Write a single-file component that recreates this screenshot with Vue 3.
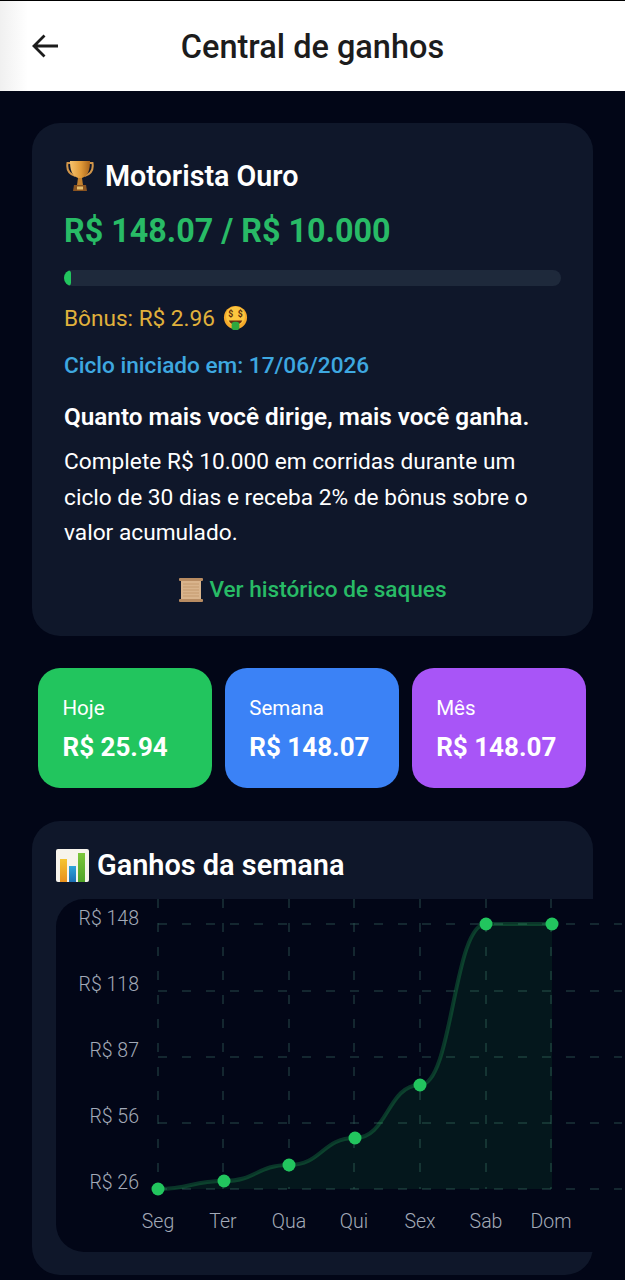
<script setup>
const stats = [
  { label: 'Hoje', value: 'R$ 25.94', cls: 'green' },
  { label: 'Semana', value: 'R$ 148.07', cls: 'blue' },
  { label: 'Mês', value: 'R$ 148.07', cls: 'purple' }
]
const pts = [[158, 1189], [224, 1181], [289, 1165], [355, 1138], [420, 1085], [486, 924], [552, 924]]
const days = ['Seg', 'Ter', 'Qua', 'Qui', 'Sex', 'Sab', 'Dom']
const yLabels = [['R$ 148', 924], ['R$ 118', 990], ['R$ 87', 1056], ['R$ 56', 1122], ['R$ 26', 1188]]
const hLines = [924, 991, 1057, 1123, 1189]
const vLines = [158, 223, 289, 354, 420, 486, 551]
let line = `M${pts[0][0]},${pts[0][1]}`
for (let i = 1; i < pts.length; i++) {
  const [x0, y0] = pts[i - 1]
  const [x1, y1] = pts[i]
  const m = (x0 + x1) / 2
  line += ` C${m},${y0} ${m},${y1} ${x1},${y1}`
}
const area = `${line} L552,1189 L158,1189 Z`
</script>

<template>
  <div class="page">
    <header class="top">
      <svg class="back" viewBox="0 0 28 26" width="28" height="26">
        <path d="M27 13H3M13.500 2.500L3 13l10.500 10.500" fill="none" stroke="#1c1c1c" stroke-width="2.800" />
      </svg>
      <h1>Central de ganhos</h1>
    </header>

    <main class="content">
      <section class="card goal">
        <div class="rank">
          <svg class="trophy" viewBox="0 0 28 32" width="28" height="32">
            <defs>
              <linearGradient id="gold" x1="0" x2="1" y1="0" y2="0">
                <stop offset="0" stop-color="#f7c26c" />
                <stop offset=".55" stop-color="#e09a38" />
                <stop offset="1" stop-color="#a8641c" />
              </linearGradient>
            </defs>
            <path d="M5 3H1.500c-1 6 1.500 11 8 13M23 3h3.500c1 6-1.500 11-8 13" fill="none" stroke="#d0954a" stroke-width="2" />
            <path d="M4 1h20c0 9-2 15-8 17h-4C6 16 4 10 4 1Z" fill="url(#gold)" />
            <path d="M12 18h4l1 7h-6Z" fill="#c4822f" />
            <path d="M8 25h12l1 6H7Z" fill="#8a5420" />
            <rect x="11" y="26.500" width="6" height="3" fill="#e8bf6c" />
          </svg>
          <span>Motorista Ouro</span>
        </div>
        <div class="amount">R$ 148.07 / R$ 10.000</div>
        <div class="track"><div class="fill"></div></div>
        <div class="bonus">
          <span>Bônus: R$ 2.96</span>
          <svg class="money" viewBox="0 0 26 26" width="25" height="26">
            <circle cx="13" cy="12.500" r="12" fill="#f6a92b" />
            <circle cx="13" cy="11" r="10" fill="#fcc63f" />
            <text x="8" y="12" class="dollar">$</text>
            <text x="18" y="12" class="dollar">$</text>
            <path d="M6 15.500h14c-1 3-3.500 4-7 4s-6-1-7-4Z" fill="#6b2c12" />
            <rect x="9" y="17" width="8" height="8.500" rx="3" fill="#2fa83f" />
          </svg>
        </div>
        <div class="cycle">Ciclo iniciado em: 17/06/2026</div>
        <div class="lead">Quanto mais você dirige, mais você ganha.</div>
        <p class="desc">Complete R$ 10.000 em corridas durante um ciclo de 30 dias e receba 2% de bônus sobre o valor acumulado.</p>
        <div class="history">
          <svg viewBox="0 0 26 26" width="26" height="26">
            <rect x="3" y="3" width="20" height="20" fill="#d9b48c" />
            <path d="M5 7h16M5 10h16M5 13h16M5 16h16M5 19h16" stroke="#c49a6e" stroke-width="1" />
            <rect x="1" y="1" width="24" height="3" rx="1" fill="#b88c62" />
            <rect x="1" y="22" width="24" height="3" rx="1" fill="#b88c62" />
          </svg>
          <span>Ver histórico de saques</span>
        </div>
      </section>

      <section class="stats">
        <div v-for="s in stats" :key="s.label" class="stat" :class="s.cls">
          <div class="stat-label">{{ s.label }}</div>
          <div class="stat-value">{{ s.value }}</div>
        </div>
      </section>

      <section class="card chart-card">
        <div class="chart-title">
          <svg viewBox="0 0 33 33" width="33" height="33">
            <defs>
              <linearGradient id="barA" x1="0" x2="0" y1="0" y2="1">
                <stop offset="0" stop-color="#f5c531" />
                <stop offset="1" stop-color="#e8901c" />
              </linearGradient>
              <linearGradient id="barB" x1="0" x2="0" y1="0" y2="1">
                <stop offset="0" stop-color="#2ea5dc" />
                <stop offset="1" stop-color="#1c6fb4" />
              </linearGradient>
              <linearGradient id="barC" x1="0" x2="0" y1="0" y2="1">
                <stop offset="0" stop-color="#7cc63a" />
                <stop offset="1" stop-color="#4fa328" />
              </linearGradient>
            </defs>
            <rect width="33" height="33" rx="2" fill="#f7f4ec" />
            <rect x="4" y="10" width="7" height="23" fill="url(#barA)" />
            <rect x="13" y="17" width="7" height="16" fill="url(#barB)" />
            <rect x="22" y="4" width="7" height="29" fill="url(#barC)" />
          </svg>
          <span>Ganhos da semana</span>
        </div>
        <div class="panel">
          <svg class="plot" viewBox="56 899 569 353" width="569" height="353">
            <line v-for="x in vLines" :key="x" :x1="x" :x2="x" y1="899" y2="1189" class="grid" />
            <line v-for="y in hLines" :key="y" x1="158" x2="622" :y1="y" :y2="y" class="grid" />
            <path :d="area" fill="#22c55e" fill-opacity="0.09" />
            <path :d="line" fill="none" stroke="#22c55e" stroke-opacity="0.25" stroke-width="4" />
            <circle v-for="p in pts" :key="p[0]" :cx="p[0]" :cy="p[1]" r="6.500" fill="#22c55e" />
            <text v-for="l in yLabels" :key="l[0]" x="139" :y="l[1] + 1" class="axis" text-anchor="end">{{ l[0] }}</text>
            <text v-for="(d, i) in days" :key="d" :x="vLines[i]" y="1228" class="axis" text-anchor="middle">{{ d }}</text>
          </svg>
        </div>
      </section>
    </main>
  </div>
</template>

<style scoped>
.page {
  width: 625px;
  height: 1280px;
  overflow: hidden;
  background: #020617;
  font-family: Roboto, "Noto Sans", sans-serif;
}
.top {
  box-sizing: border-box;
  height: 91px;
  border-top: 1px solid #000;
  background: linear-gradient(90deg, #f0f0f0 0, #ffffff 28px);
  display: flex;
  align-items: center;
  justify-content: center;
  position: relative;
}
.back {
  position: absolute;
  left: 31px;
  top: 32px;
}
h1 {
  margin: 0;
  padding-top: 2px;
  font-size: 32.500px;
  font-weight: 500;
  color: #1c1c1c;
  line-height: 88px;
}
.content {
  padding: 32px 32px 0;
}
.card {
  background: #0f172a;
  border-radius: 28px;
  box-sizing: border-box;
  width: 561px;
}
.goal {
  padding: 32px;
  height: 513px;
}
.rank {
  display: flex;
  align-items: center;
  gap: 11px;
  height: 41px;
  padding-left: 2px;
  color: #fff;
  font-size: 28.700px;
  font-weight: 600;
}
.amount {
  margin-top: 14px;
  line-height: 42px;
  font-size: 32.300px;
  font-weight: 700;
  color: #28bb66;
}
.track {
  margin-top: 18px;
  height: 16px;
  border-radius: 8px;
  background: #1e293b;
  overflow: hidden;
}
.fill {
  width: 7px;
  height: 100%;
  background: #22c55e;
  border-radius: 8px;
}
.bonus {
  margin-top: 17px;
  display: flex;
  align-items: center;
  gap: 8px;
  height: 30px;
  font-size: 22.600px;
  color: #e0b13c;
}
.dollar {
  font-size: 9px;
  font-weight: 700;
  fill: #5a2c0c;
  text-anchor: middle;
}
.cycle {
  margin-top: 18px;
  line-height: 30px;
  font-size: 22.600px;
  font-weight: 500;
  color: #3ea8e0;
}
.lead {
  margin-top: 20px;
  line-height: 32px;
  font-size: 24.300px;
  font-weight: 600;
  color: #fff;
}
.desc {
  margin: 11px 0 0;
  line-height: 35.500px;
  font-size: 22.700px;
  color: #fff;
}
.history {
  margin-top: 24px;
  display: flex;
  justify-content: center;
  align-items: center;
  gap: 5px;
  height: 30px;
  font-size: 22.600px;
  font-weight: 500;
  color: #28bb66;
}
.stats {
  margin-top: 32px;
  width: 561px;
  box-sizing: border-box;
  padding: 0 7px 0 6px;
  display: flex;
  gap: 12.500px;
}
.stat {
  flex: 1;
  box-sizing: border-box;
  height: 120px;
  padding: 25px 0 0 24.500px;
  border-radius: 22px;
  color: #fff;
}
.green { background: #22c55e; }
.blue { background: #3b82f6; }
.purple { background: #a855f7; }
.stat-label {
  line-height: 30px;
  font-size: 20.500px;
}
.stat-value {
  margin-top: 6px;
  line-height: 36px;
  font-size: 26px;
  font-weight: 700;
}
.chart-card {
  margin-top: 33px;
  height: 454px;
  padding: 24px 0 0 24px;
}
.chart-title {
  display: flex;
  align-items: center;
  gap: 8px;
  height: 40px;
  color: #fff;
  font-size: 28.900px;
  font-weight: 600;
}
.panel {
  margin-top: 14px;
  width: 600px;
  height: 353px;
  border-radius: 28px;
  background: #020617;
  overflow: hidden;
}
.plot {
  display: block;
}
.grid {
  stroke: #2f5a55;
  stroke-opacity: 0.55;
  stroke-width: 1.500;
  stroke-dasharray: 9 15;
}
.axis {
  font-family: Roboto, sans-serif;
  font-size: 19.500px;
  font-weight: 350;
  fill: #a3aab8;
}
</style>

<style>
html, body {
  margin: 0;
  background: #020617;
  overflow: hidden;
}
</style>
